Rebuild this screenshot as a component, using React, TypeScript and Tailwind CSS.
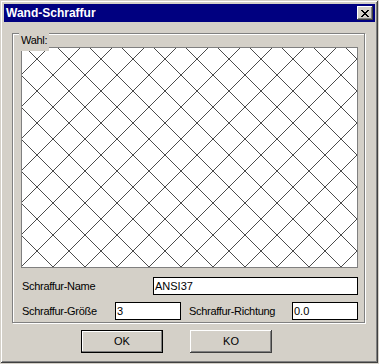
import React from 'react'

// ── Hatch preview (ANSI37 cross-hatch) ─────────────────────────────────────

const PERIOD = 32
const W = 335
const H = 219

function HatchPreview() {
  const a: number[] = []
  for (let c = 26 - PERIOD; c < W + H + PERIOD; c += PERIOD) a.push(c)
  const b: number[] = []
  for (let c = 4 - PERIOD * 8; c < W + PERIOD; c += PERIOD) b.push(c)

  return (
    <div className="ml-[8px] mt-[13px] h-[221px] w-[337px] border border-[#808080] bg-white">
      <svg width={W} height={H} viewBox={`0 0 ${W} ${H}`} shapeRendering="crispEdges" className="block">
        {a.map((c) => (
          <line key={'a' + c} x1={c} y1={0} x2={c - 240} y2={240} stroke="#000" strokeWidth={0.7} />
        ))}
        {b.map((c) => (
          <line key={'b' + c} x1={c} y1={0} x2={c + 240} y2={240} stroke="#000" strokeWidth={0.7} />
        ))}
      </svg>
    </div>
  )
}

// ── Small pieces ───────────────────────────────────────────────────────────

function CloseGlyph() {
  const rows = ['XX....XX', '.XX..XX.', '..XXXX..', '...XX...', '..XXXX..', '.XX..XX.', 'XX....XX']
  return (
    <svg width={8} height={7} viewBox="0 0 8 7" shapeRendering="crispEdges" className="block">
      {rows.flatMap((r, y) =>
        r.split('').map((ch, x) => (ch === 'X' ? <rect key={`${x}-${y}`} x={x} y={y} width={1} height={1} fill="#000" /> : null)),
      )}
    </svg>
  )
}

function Field({ value, width }: { value: string; width: string }) {
  return (
    <div className={`${width} flex h-[18px] items-center border border-black bg-white pl-[1px] text-[11px] leading-none text-black`}>
      {value}
    </div>
  )
}

function Label({ children, className = '' }: { children: React.ReactNode; className?: string }) {
  return <span className={`text-[11px] leading-[13px] tracking-[-0.3px] text-black ${className}`}>{children}</span>
}

// ── Dialog ─────────────────────────────────────────────────────────────────

export default function App() {
  return (
    <div
      className="flex h-[364px] w-[379px] flex-col bg-[#d4d0c8] p-[4px] shadow-[inset_-1px_-1px_#d4d0c8,inset_1px_1px_#d4d0c8,inset_-2px_-2px_#404040,inset_2px_2px_#fff,inset_-3px_-3px_#808080]"
      style={{ fontFamily: '"Liberation Sans", Arial, sans-serif' }}
    >
      {/* Title bar */}
      <div className="flex h-[18px] items-center justify-between bg-[#000080] pl-[2px] pr-[2px]">
        <span className="text-[12px] font-bold leading-[18px] text-white">Wand-Schraffur</span>
        <div className="flex h-[14px] w-[16px] items-center justify-center bg-[#d4d0c8] shadow-[inset_-1px_-1px_#404040,inset_1px_1px_#fff,inset_-2px_-2px_#808080]">
          <CloseGlyph />
        </div>
      </div>

      {/* Group box */}
      <div className="relative ml-[8px] mt-[11px] flex h-[290px] w-[353px] flex-col border border-[#808080] shadow-[inset_1px_1px_#fff,1px_1px_#fff]">
        <span className="absolute left-[6px] top-[-7px] bg-[#d4d0c8] px-[2px]">
          <Label>Wahl:</Label>
        </span>

        <HatchPreview />

        <div className="ml-[9px] mt-[9px] flex items-center">
          <Label className="w-[131px]">Schraffur-Name</Label>
          <Field value="ANSI37" width="w-[205px]" />
        </div>

        <div className="ml-[9px] mt-[7px] flex items-center">
          <Label className="w-[93px]">Schraffur-Größe</Label>
          <Field value="3" width="w-[66px]" />
          <Label className="ml-[8px] w-[103px]">Schraffur-Richtung</Label>
          <Field value="0.0" width="w-[66px]" />
        </div>
      </div>

      {/* Buttons */}
      <div className="ml-[77px] mt-[7px] flex gap-[27px]">
        <button className="flex h-[23px] w-[82px] items-center justify-center border border-black bg-[#d4d0c8] text-[11px] text-black shadow-[inset_-1px_-1px_#808080,inset_1px_1px_#fff]">
          OK
        </button>
        <button className="flex h-[23px] w-[82px] items-center justify-center bg-[#d4d0c8] text-[11px] text-black shadow-[inset_-1px_-1px_#404040,inset_1px_1px_#fff,inset_-2px_-2px_#808080]">
          KO
        </button>
      </div>
    </div>
  )
}
